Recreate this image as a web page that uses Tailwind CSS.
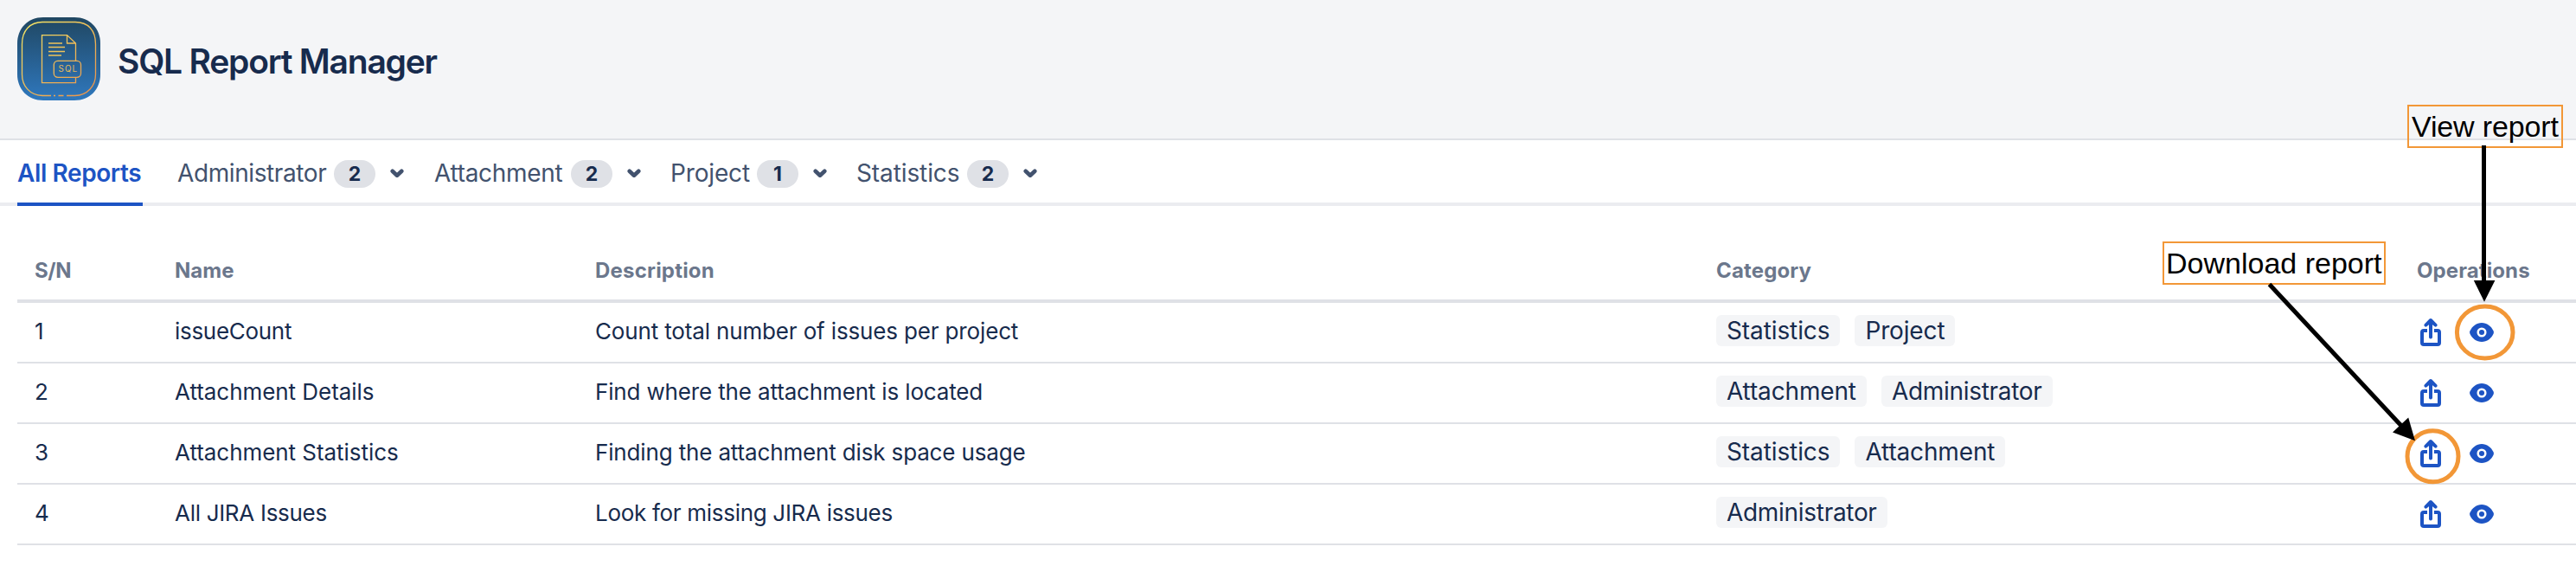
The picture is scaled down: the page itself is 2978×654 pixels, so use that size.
<!DOCTYPE html>
<html lang="en">
<head>
  <meta charset="UTF-8">
  <meta name="viewport" content="width=device-width, initial-scale=1.0">
  <title>SQL Report Manager</title>
  <script src="https://cdn.jsdelivr.net/npm/@tailwindcss/browser@4"></script>
</head>
<body class="relative h-[654px] overflow-hidden bg-white font-['Inter',sans-serif] text-[#172b4d]">

  <!-- Shared icons -->
  <svg class="hidden">
    <symbol id="icon-share" viewBox="0 0 24 32">
      <g fill="none" stroke="currentColor" stroke-width="4">
        <path d="M8 14H4a2 2 0 0 0-2 2v12a2 2 0 0 0 2 2h16a2 2 0 0 0 2-2V16a2 2 0 0 0-2-2h-4"/>
        <path d="M12 3v18.500" stroke-linecap="round"/>
      </g>
      <path d="M12 0c.5 0 1 .2 1.400.6l5.800 6c1.400 1.700-.8 4-2.600 2.700L12 5.600 7.400 9.300C5.600 10.600 3.400 8.300 4.800 6.600l5.800-6c.4-.4.9-.6 1.400-.6z" fill="currentColor"/>
    </symbol>
    <symbol id="icon-eye" viewBox="0 0 28 22">
      <path d="M14 0C20 0 25 4 27.500 9.300q.8 1.700 0 3.400C25 18 20 22 14 22S3 18 .5 12.700q-.8-1.700 0-3.400C3 4 8 0 14 0z" fill="currentColor"/>
      <circle cx="14" cy="11" r="4.300" fill="none" stroke="#fff" stroke-width="2.500"/>
    </symbol>
    <symbol id="icon-chevron" viewBox="0 0 16 11">
      <path d="M2.700 2.800 8 7.700l5.300-4.900" fill="none" stroke="currentColor" stroke-width="4.600" stroke-linecap="round" stroke-linejoin="round"/>
    </symbol>
  </svg>

  <!-- Header -->
  <header class="flex h-[162px] items-start border-b-2 border-[#dfe1e6] bg-[#f4f5f7] px-5 pt-5">
    <svg class="h-24 w-24" viewBox="0 0 96 96" fill="none">
      <defs>
        <linearGradient id="bg" x1="0" y1="0" x2="0" y2="1">
          <stop offset="0" stop-color="#204762"/>
          <stop offset="1" stop-color="#2f78be"/>
        </linearGradient>
        <linearGradient id="gold" gradientUnits="userSpaceOnUse" x1="10" y1="10" x2="80" y2="92">
          <stop offset="0" stop-color="#f7e463"/>
          <stop offset="1" stop-color="#ea934b"/>
        </linearGradient>
      </defs>
      <path d="M30 0h36c18 0 30 13 30 30v36c0 17-12 30-30 30H30C12 96 0 83 0 66V30C0 13 12 0 30 0z" fill="url(#bg)"/>
      <g stroke="url(#gold)" stroke-width="1.300">
        <path d="M39 90.500H29C14 90 5.500 79 5.500 66V31C5.500 15 15 5.500 29 5.500h38C82 5.500 90.500 15 90.500 31v35c0 13-9 24-24 24.500H57M42 90.500h2M47.500 90.500h6"/>
        <path d="M67.500 50V30L57.500 20.600h-29v55h39V69.500M57.500 20.600V30h10"/>
        <path d="M36 30h16M36 34.500h19M36 39.500h19M36 44h15" stroke="#eec35a" stroke-width="1.500"/>
        <rect x="42.300" y="50.300" width="31.200" height="19" rx="4.500"/>
      </g>
      <text x="47.500" y="63" textLength="21.500" font-family="Inter" font-size="9.800" fill="#e3b95c">SQL</text>
    </svg>
    <h1 class="ml-5 h-24 pt-[3px] text-[39px] leading-[96px] font-semibold tracking-[-1.22px] whitespace-nowrap">SQL Report Manager</h1>
  </header>

  <!-- Category tabs -->
  <nav class="flex h-[76px] items-start gap-[35px] border-b-4 border-[#ebecf0] px-5 text-[28px] leading-[72px] text-[#42526e]">
    <a class="mr-[5px] h-[76px] w-[145px] border-b-4 border-[#1d54c4] pt-[2px] font-semibold tracking-[-0.4px] whitespace-nowrap text-[#1d54c4]">All Reports</a>
    <a class="flex h-[76px] items-center">
      <span class="w-[181px] tracking-[-0.4px]">Administrator</span>
      <span class="mt-[2px] mr-[17px] h-8 w-12 rounded-full bg-[#dfe1e6] text-center text-[23px] leading-8 font-bold text-[#172b4d]">2</span>
      <svg class="h-[11px] w-4"><use href="#icon-chevron"/></svg>
    </a>
    <a class="flex h-[76px] items-center">
      <span class="w-[158px] tracking-[-0.3px]">Attachment</span>
      <span class="mt-[2px] mr-[17px] h-8 w-12 rounded-full bg-[#dfe1e6] text-center text-[23px] leading-8 font-bold text-[#172b4d]">2</span>
      <svg class="h-[11px] w-4"><use href="#icon-chevron"/></svg>
    </a>
    <a class="flex h-[76px] items-center">
      <span class="-ml-px w-[100px] tracking-[-0.15px]">Project</span>
      <span class="mt-[2px] mr-[17px] h-8 w-12 rounded-full bg-[#dfe1e6] text-center text-[23px] leading-8 font-bold text-[#172b4d]">1</span>
      <svg class="h-[11px] w-4"><use href="#icon-chevron"/></svg>
    </a>
    <a class="flex h-[76px] items-center">
      <span class="-ml-px w-[128px] tracking-[-0.1px]">Statistics</span>
      <span class="mt-[2px] mr-[17px] h-8 w-12 rounded-full bg-[#dfe1e6] text-center text-[23px] leading-8 font-bold text-[#172b4d]">2</span>
      <svg class="h-[11px] w-4"><use href="#icon-chevron"/></svg>
    </a>
  </nav>

  <!-- Reports table -->
  <main class="pt-[37px] pl-5">
    <table class="w-full table-fixed border-separate border-spacing-0 text-left">
      <colgroup>
        <col class="w-[162px]">
        <col class="w-[486px]">
        <col class="w-[1296px]">
        <col class="w-[810px]">
        <col>
      </colgroup>
      <thead class="text-2xl font-semibold text-[#6b778c]">
        <tr class="h-[75px]">
          <th class="border-b-4 border-[#dfe1e6] pt-1 pl-5 tracking-[-0.4px]">S/N</th>
          <th class="border-b-4 border-[#dfe1e6] pt-1 pl-5">Name</th>
          <th class="border-b-4 border-[#dfe1e6] pt-1 pl-5 tracking-[0.2px]">Description</th>
          <th class="border-b-4 border-[#dfe1e6] pt-1 pl-5 tracking-[0.15px]">Category</th>
          <th class="border-b-4 border-[#dfe1e6] pt-1 pl-5 tracking-[0.1px]">Operations</th>
        </tr>
      </thead>
      <tbody id="reports" class="text-[26px] leading-[36px] tracking-[-0.15px]"></tbody>
    </table>
  </main>

  <!-- Callouts -->
  <div class="absolute top-[121px] left-[2783px] h-[50px] w-[180px] border-2 border-[#f29737] pl-[3px] font-['Liberation_Sans',Arial,sans-serif] text-[34px] leading-[46px] tracking-[-0.14px] whitespace-nowrap text-black">View report</div>
  <div class="absolute top-[279px] left-[2500px] h-[50px] w-[258px] border-2 border-[#f29737] pl-[2px] font-['Liberation_Sans',Arial,sans-serif] text-[34px] leading-[46px] whitespace-nowrap text-black">Download report</div>
  <svg class="pointer-events-none absolute top-0 left-0 h-[654px] w-[2978px]" viewBox="0 0 2978 654">
    <g fill="none" stroke="#f29737" stroke-width="5">
      <ellipse cx="2872.700" cy="384" rx="32.300" ry="30"/>
      <ellipse cx="2812.500" cy="527.300" rx="29.500" ry="29.500"/>
    </g>
    <g stroke="#000" stroke-width="5">
      <path d="M2871.500 168v158"/>
      <path d="M2623.500 328.500 2777 493"/>
    </g>
    <path d="M2859.800 324h24.600L2872 348.700z"/>
    <path d="M2784.200 482.500 2792 509.200 2766 499.500z"/>
  </svg>

  <script>
    const reports = [
      { name: 'issueCount', description: 'Count total number of issues per project', categories: ['Statistics', 'Project'] },
      { name: 'Attachment Details', description: 'Find where the attachment is located', categories: ['Attachment', 'Administrator'] },
      { name: 'Attachment Statistics', description: 'Finding the attachment disk space usage', categories: ['Statistics', 'Attachment'] },
      { name: 'All JIRA Issues', description: 'Look for missing JIRA issues', categories: ['Administrator'] },
    ];

    const tracking = {
      'Statistics': 'tracking-[-0.1px]',
      'Project': 'tracking-[-0.15px]',
      'Attachment': 'tracking-[-0.15px]',
      'Administrator': 'tracking-[-0.3px]',
      'issueCount': 'tracking-[-0.3px]',
      'Attachment Details': 'tracking-[-0.05px]',
      'Attachment Statistics': 'tracking-[-0.05px]',
      'All JIRA Issues': 'tracking-[-0.3px]',
      'Look for missing JIRA issues': 'tracking-[-0.3px]',
    };

    // Render table rows
    document.getElementById('reports').innerHTML = reports.map((report, i) => `
      <tr class="h-[70px]">
        <td class="border-b-2 border-[#dfe1e6] pb-[3px] pl-5">${i + 1}</td>
        <td class="border-b-2 border-[#dfe1e6] pb-[3px] pl-5 ${tracking[report.name]}">${report.name}</td>
        <td class="border-b-2 border-[#dfe1e6] pb-[3px] pl-5 ${tracking[report.description] || ''}">${report.description}</td>
        <td class="border-b-2 border-[#dfe1e6] pb-1 pl-5">
          <div class="flex gap-[17px] text-[28px]">
            ${report.categories.map(c => `<span class="h-9 rounded-md bg-[#f4f5f7] px-3 ${tracking[c]}">${c}</span>`).join('')}
          </div>
        </td>
        <td class="border-b-2 border-[#dfe1e6] pl-6 text-[#1d54c4]">
          <div class="flex items-center gap-[33px]">
            <svg class="h-8 w-6"><use href="#icon-share"/></svg>
            <svg class="h-[22px] w-7"><use href="#icon-eye"/></svg>
          </div>
        </td>
      </tr>
    `).join('');
  </script>
</body>
</html>
